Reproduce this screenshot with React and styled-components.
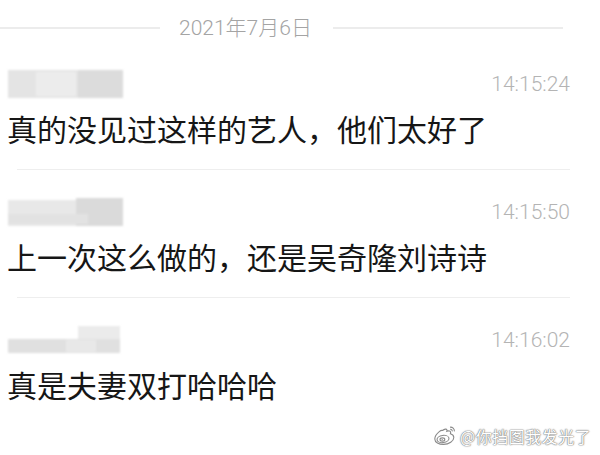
import React from 'react';
import styled, { createGlobalStyle } from 'styled-components';

const GlobalStyle = createGlobalStyle`
  html, body {
    margin: 0;
    padding: 0;
    background: #ffffff;
  }
`;

const messages = [
  { time: '14:15:24', text: '真的没见过这样的艺人，他们太好了', blur: 'a' },
  { time: '14:15:50', text: '上一次这么做的，还是吴奇隆刘诗诗', blur: 'b' },
  { time: '14:16:02', text: '真是夫妻双打哈哈哈', blur: 'c' },
];

// blurred-out nicknames, drawn as soft grey patches
const blurShapes = {
  a: [
    { x: 2, y: 2, w: 115, h: 28, c: '#e4e4e4' },
    { x: 30, y: 4, w: 40, h: 24, c: '#ececec' },
    { x: 72, y: 2, w: 45, h: 28, c: '#dcdcdc' },
  ],
  b: [
    { x: 2, y: 4, w: 70, h: 26, c: '#e8e8e8' },
    { x: 70, y: 2, w: 47, h: 28, c: '#dadada' },
    { x: 2, y: 18, w: 80, h: 10, c: '#e2e2e2' },
  ],
  c: [
    { x: 72, y: 2, w: 42, h: 14, c: '#ebebeb' },
    { x: 2, y: 15, w: 112, h: 14, c: '#e0e0e0' },
    { x: 60, y: 16, w: 30, h: 12, c: '#e8e8e8' },
  ],
};

const NameBlur = ({ variant }) => (
  <svg width="121" height="32" viewBox="0 0 121 32" style={{ marginLeft: '-2px' }}>
    <defs>
      <filter id={`soft-${variant}`} x="-10%" y="-20%" width="120%" height="140%">
        <feGaussianBlur stdDeviation="1.2" />
      </filter>
    </defs>
    <g filter={`url(#soft-${variant})`}>
      {blurShapes[variant].map((s, i) => (
        <rect key={i} x={s.x} y={s.y} width={s.w} height={s.h} fill={s.c} />
      ))}
    </g>
  </svg>
);

const WeiboLogo = () => (
  <svg width="26" height="23" viewBox="0 0 26 23" fill="#ffffff" stroke="#8a8a8a" strokeWidth="1.1">
    <path d="M10.5 6.5c2-1.6 4-1.8 4.4-.8.3.7-.1 1.6-.1 1.6s1.6-.6 2.7-.3c1.3.4 1.3 1.8.9 2.8 2.2.6 3.4 1.9 3.4 3.6 0 3.6-4.7 7-10.3 7C6.8 20.4 2.8 18.4 2.8 15c0-2.2 1.8-5.2 4.5-7.4 1.1-.9 2.1-1.5 3.2-1.1z" />
    <ellipse cx="11" cy="15" rx="6" ry="3.6" transform="rotate(-8 11 15)" />
    <ellipse cx="10.4" cy="15.6" rx="2.4" ry="1.7" />
    <circle cx="10.2" cy="15.8" r="0.7" fill="#8a8a8a" stroke="none" />
    <path d="M18 3.2c2.4-.3 4.6 1.6 4.4 4.2" fill="none" />
    <path d="M18.3 5.4c1.1-.1 2.1.8 2 2" fill="none" />
  </svg>
);

const App = () => {
  return (
    <Page>
      <GlobalStyle />
      <DateRow>
        <DateLine width="160px" />
        <DateText>2021年7月6日</DateText>
        <DateLine width="230px" />
      </DateRow>
      {messages.map((m, i) => (
        <Item key={m.time} last={i === messages.length - 1}>
          <Header>
            <NameBlur variant={m.blur} />
            <Time>{m.time}</Time>
          </Header>
          <Body>{m.text}</Body>
        </Item>
      ))}
      <Watermark>
        <WeiboLogo />
        <WatermarkText>@你挡图我发光了</WatermarkText>
      </Watermark>
    </Page>
  );
};

export default App;

const Page = styled.div`
  position: relative;
  width: 600px;
  height: 455px;
  overflow: hidden;
  background: #ffffff;
`;

const DateRow = styled.div`
  display: flex;
  align-items: center;
  height: 28px;
  padding-top: 14px;
`;

const DateLine = styled.div`
  width: ${(p) => p.width};
  height: 2px;
  background: #ececec;
  filter: blur(0.4px);
`;

const DateText = styled.span`
  margin: 0 21px 0 19px;
  font-family: "Roboto", "Noto Sans CJK SC", sans-serif;
  font-weight: 300;
  font-size: 21px;
  line-height: 28px;
  color: #a4a4a4;
  white-space: nowrap;
`;

const Item = styled.div`
  display: flex;
  flex-direction: column;
  margin: 0 30px 0 17px;
  padding-top: 28px;
  padding-bottom: 21px;
  border-bottom: 1px solid ${(p) => (p.last ? 'transparent' : '#eeeeee')};
`;

const Header = styled.div`
  display: flex;
  justify-content: space-between;
  align-items: center;
  height: 28px;
  margin-left: -9px;
`;

const Time = styled.span`
  font-family: "Roboto", sans-serif;
  font-weight: 300;
  font-size: 21px;
  line-height: 28px;
  color: #b4b4b4;
`;

const Body = styled.div`
  margin: 10px 0 0 -10px;
  font-family: "Noto Sans CJK SC", sans-serif;
  font-size: 30px;
  line-height: 40px;
  color: #161616;
  white-space: nowrap;
`;

const Watermark = styled.div`
  position: absolute;
  left: 432px;
  top: 424px;
  display: flex;
  align-items: center;
  column-gap: 2px;
`;

const WatermarkText = styled.span`
  font-family: "Noto Sans CJK SC", sans-serif;
  font-size: 16px;
  line-height: 22px;
  color: #ffffff;
  letter-spacing: 0.5px;
  text-shadow: 0 0 1px #7a7a7a, 0 0 1px #7a7a7a, 0 0 2px #9a9a9a;
  white-space: nowrap;
`;
